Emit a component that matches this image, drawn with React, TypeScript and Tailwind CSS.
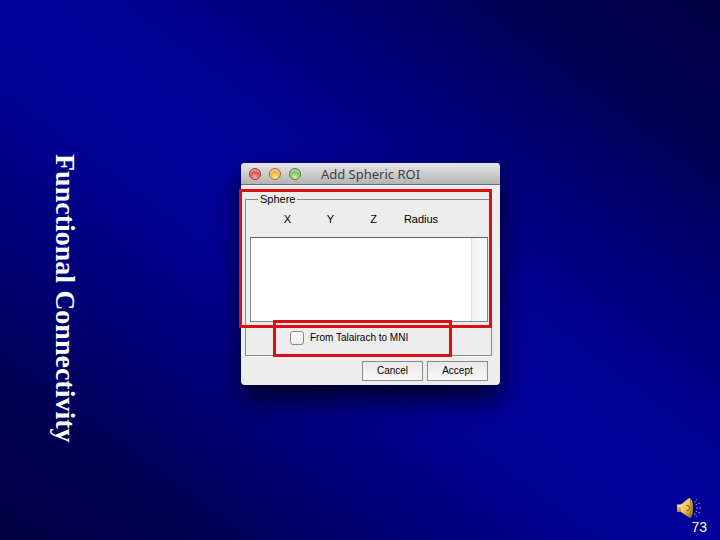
import { useId, useState } from "react";

const columns = ["X", "Y", "Z"];

function TrafficLights() {
  return (
    <div className="flex gap-2">
      <button
        type="button"
        aria-label="Close"
        className="size-3 rounded-full border border-[#8f3a3a] bg-[radial-gradient(circle_at_50%_90%,#ffb0a8,#ec5252_50%,#c23a3e)] shadow-[inset_0_2px_1px_rgba(255,255,255,0.5)]"
      />
      <button
        type="button"
        aria-label="Minimize"
        className="size-3 rounded-full border border-[#9b6c34] bg-[radial-gradient(circle_at_50%_90%,#ffe9a0,#f7b54c_50%,#d98a35)] shadow-[inset_0_2px_1px_rgba(255,255,255,0.5)]"
      />
      <button
        type="button"
        aria-label="Zoom"
        className="size-3 rounded-full border border-[#4c7a3c] bg-[radial-gradient(circle_at_50%_90%,#d6f7a8,#85c968_50%,#559a4c)] shadow-[inset_0_2px_1px_rgba(255,255,255,0.5)]"
      />
    </div>
  );
}

function SpeakerIcon() {
  return (
    <svg width="26" height="22" viewBox="0 0 26 22" aria-hidden="true">
      <defs>
        <linearGradient id="cone" x1="0" y1="0" x2="1" y2="1">
          <stop offset="0" stopColor="#fff3b0" />
          <stop offset="0.5" stopColor="#e8bb45" />
          <stop offset="1" stopColor="#8a5c10" />
        </linearGradient>
        <linearGradient id="magnet" x1="0" y1="0" x2="0" y2="1">
          <stop offset="0" stopColor="#fff0a8" />
          <stop offset="1" stopColor="#a8761c" />
        </linearGradient>
      </defs>
      <path d="M0 7.500h5v7.500H0z" fill="url(#magnet)" />
      <path d="M4 7.500 12 1Q16 2 16 11T13 21L4 15z" fill="url(#cone)" />
      <path d="M13.500 2q1.800 9 0 18" fill="none" stroke="#a87820" />
      <path
        d="M9.500 8.500q3 0 3 2.500t-3 2.500"
        fill="#f6dc78"
        stroke="#6c480c"
      />
      <path
        d="M17.500 5.500 20 2M18.500 8 23 6M19 11h5M18.500 14 23 16M17.500 16.500 20 20"
        fill="none"
        stroke="#9094e0"
        strokeDasharray="2 1"
      />
    </svg>
  );
}

function SphericRoiDialog() {
  const checkboxId = useId();
  const [convert, setConvert] = useState(false);

  return (
    <section
      role="dialog"
      aria-label="Add Spheric ROI"
      className="relative w-[259px] rounded bg-[#ededed] font-['Liberation_Sans',Arial,sans-serif] text-[10px] leading-3 text-black shadow-[0_14px_26px_rgba(0,0,0,0.7)]"
    >
      <header className="grid h-[22px] grid-cols-[1fr_auto_1fr] items-center rounded-t border-b border-[#707070] bg-linear-to-b from-[#e6e6e6] to-[#b4b4b4] px-2">
        <TrafficLights />
        <h2 className="font-['Noto_Sans',sans-serif] text-[13px] leading-5 text-[#404040]">
          Add Spheric ROI
        </h2>
      </header>

      <div className="px-1 pt-2 pb-1">
        <fieldset className="mr-1 border border-[#8a8a8a] pr-[3px] pb-2 pl-1 shadow-[0_1px_0_#ffffff]">
          <legend className="ml-2 px-[2px] text-[11px] leading-3">Sphere</legend>
          <div className="flex items-center pt-1 pl-4 text-[11px] leading-5">
            {columns.map((name) => (
              <span key={name} className="w-[43px] text-center">
                {name}
              </span>
            ))}
            <span className="w-[52px] text-center">Radius</span>
          </div>
          <div
            role="listbox"
            aria-label="Spheres"
            className="mt-2 flex h-[85px] justify-end border border-[#858585] border-t-[#606060] bg-white"
          >
            <div className="w-4 border-l border-[#dedede] bg-linear-to-r from-[#f1f1f1] to-white" />
          </div>
          <div className="mt-2 mb-px flex h-4 items-center gap-[6px] pl-10">
            <input
              id={checkboxId}
              type="checkbox"
              checked={convert}
              onChange={(event) => setConvert(event.target.checked)}
              className="size-[14px] appearance-none rounded-[3px] border border-[#888888] bg-linear-to-b from-white to-[#ececec] checked:bg-[#5b8fd8]"
            />
            <label htmlFor={checkboxId}>From Talairach to MNI</label>
          </div>
        </fieldset>

        <div className="mt-[5px] mr-2 flex justify-end gap-1">
          <button
            type="button"
            className="h-5 w-[61px] border border-[#8c8c8c] bg-linear-to-b from-[#e9e9e9] to-[#f8f8f8] pb-px"
          >
            Cancel
          </button>
          <button
            type="button"
            className="h-5 w-[61px] border border-[#8c8c8c] bg-linear-to-b from-[#e9e9e9] to-[#f8f8f8] pb-px"
          >
            Accept
          </button>
        </div>
      </div>

      {/* Callouts drawn over the dialog */}
      <div className="pointer-events-none absolute top-[26px] right-2 -left-[2px] h-[139px] border-3 border-[#dc1010]" />
      <div className="pointer-events-none absolute top-[157px] left-8 h-[37px] w-[179px] border-3 border-[#dc1010]" />
    </section>
  );
}

export default function App() {
  return (
    <main className="grid min-h-screen grid-cols-[1fr_auto_1fr] items-center bg-[linear-gradient(to_top_right,#000044,#000055_15%,#000074_27%,#00008f_40%,#000099_50%,#00008f_60%,#000074_73%,#000055_85%,#000044)] pl-[21px]">
      <h1 className="mt-14 ml-[30px] justify-self-start font-['Liberation_Serif',serif] text-[28px] leading-7 font-bold text-white [writing-mode:vertical-rl]">
        Functional Connectivity
      </h1>

      <div className="pt-2">
        <SphericRoiDialog />
      </div>

      <footer className="flex flex-col items-end self-end pr-[13px] pb-[5px] font-['Liberation_Sans',Arial,sans-serif] text-sm leading-4 text-[#ffffcc]">
        <button type="button" aria-label="Play narration" className="mr-1">
          <SpeakerIcon />
        </button>
        <span>73</span>
      </footer>
    </main>
  );
}
